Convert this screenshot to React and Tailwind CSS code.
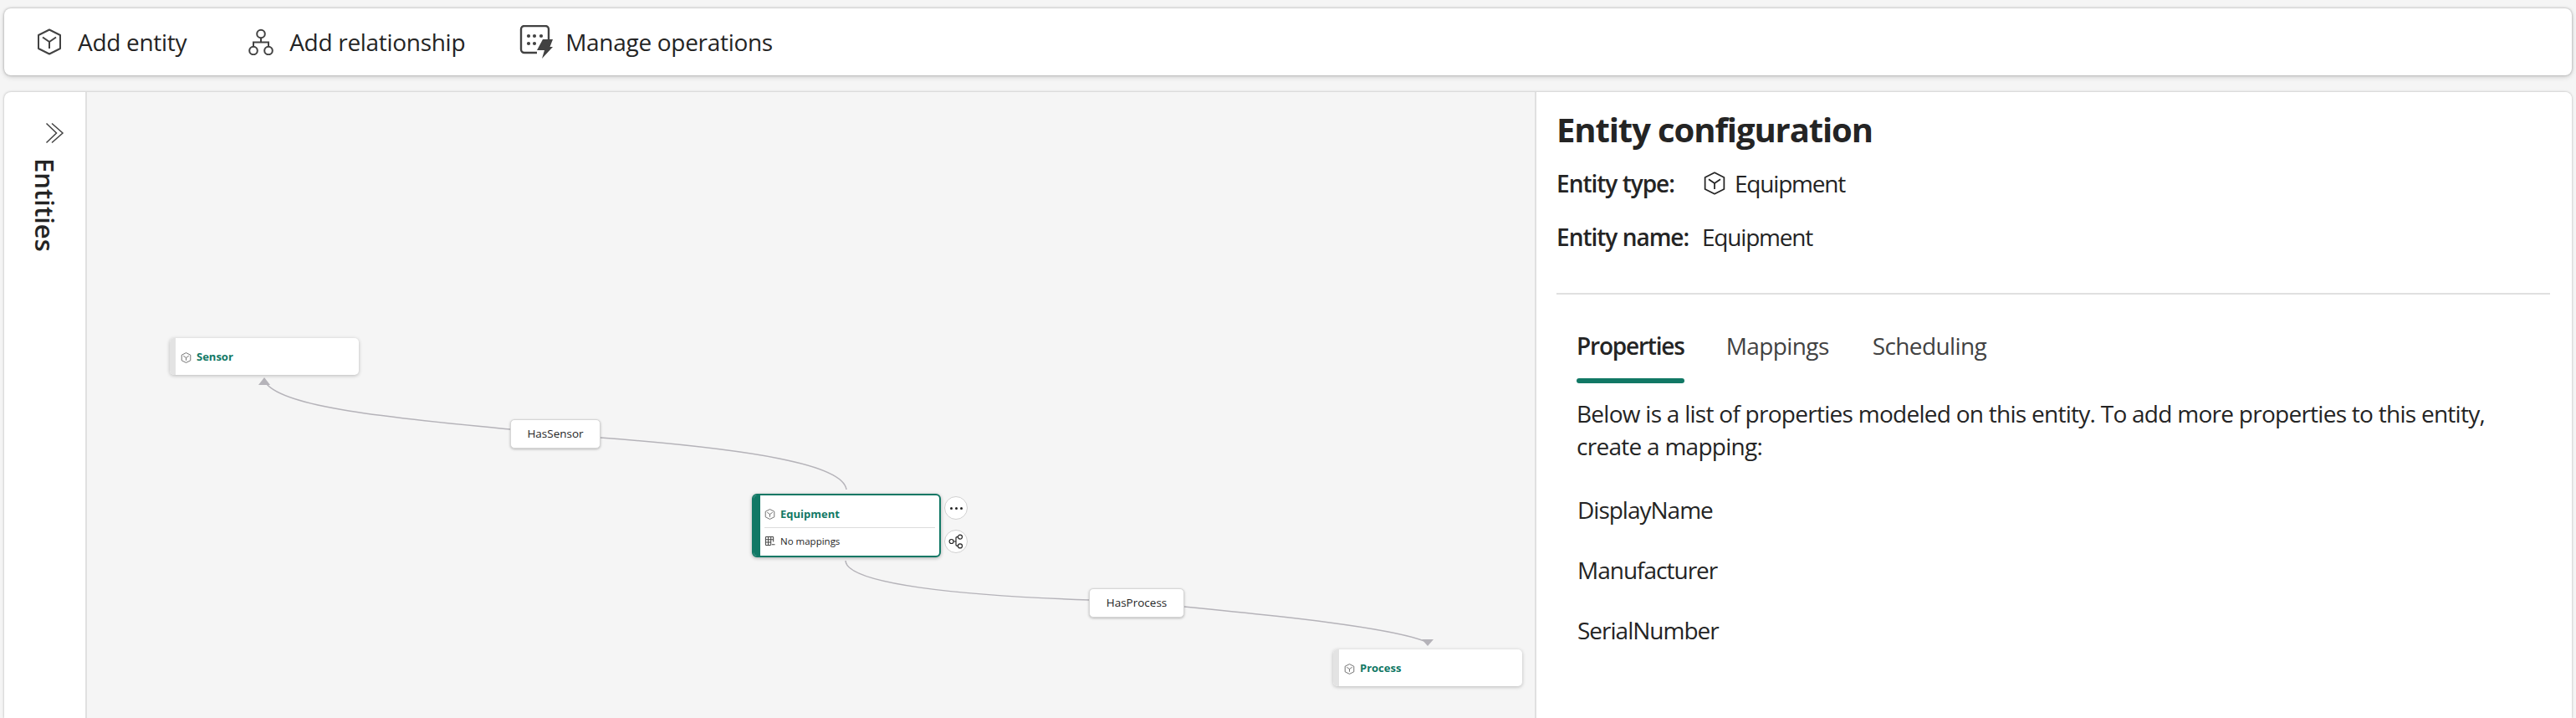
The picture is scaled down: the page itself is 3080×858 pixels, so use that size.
const font = { fontFamily: '"Open Sans", "Noto Sans", sans-serif' };

function CubeIcon({ className }) {
  return (
    <svg viewBox="0 0 32 32" fill="none" stroke="currentColor" strokeWidth="2" strokeLinejoin="round" className={className}>
      <path d="M16 1.500 29 8V24L16 30.500 3 24V8Z" />
      <path d="M8 10.500 16 16 24 10.500M16 16V24" />
    </svg>
  );
}

function RelationshipIcon({ className }) {
  return (
    <svg viewBox="0 0 32 32" fill="none" stroke="currentColor" strokeWidth="2" className={className}>
      <circle cx="16" cy="6.500" r="4.800" />
      <circle cx="7" cy="26.500" r="4.800" />
      <circle cx="25" cy="26.500" r="4.800" />
      <path d="M16 11.300V16.500M7 21.700V16.500H25V21.700" />
    </svg>
  );
}

function OperationsIcon({ className }) {
  return (
    <svg viewBox="0 0 40 40" className={className}>
      <path d="M21 33H6a4 4 0 0 1-4-4V5a4 4 0 0 1 4-4h25a4 4 0 0 1 4 4v19" fill="none" stroke="currentColor" strokeWidth="2.400" />
      <g fill="currentColor">
        <circle cx="11" cy="13" r="2.100" /><circle cx="18" cy="13" r="2.100" /><circle cx="26" cy="13" r="2.100" />
        <circle cx="11" cy="22" r="2.100" /><circle cx="18" cy="22" r="2.100" />
        <path d="M28 17h12l-3.500 9H40L27 40l3-10h-9Z" />
      </g>
    </svg>
  );
}

function ChevronsIcon({ className }) {
  return (
    <svg viewBox="0 0 24 26" fill="none" stroke="currentColor" strokeWidth="1.500" className={className}>
      <path d="M1.500 1.500 13.500 13 1.500 24.500" />
      <path d="M8 1.500 21 13 8 24.500" />
    </svg>
  );
}

function TableIcon({ className }) {
  return (
    <svg viewBox="0 0 14 14" fill="none" stroke="currentColor" strokeWidth="1.100" className={className}>
      <path d="M8 12.500H2.500a1 1 0 0 1-1-1V2.500a1 1 0 0 1 1-1h8a1 1 0 0 1 1 1V8" />
      <path d="M1.500 5H11.500M1.500 8.500H8M5 1.500V12.500M8.300 1.500V12.500" />
      <path d="M9.500 11.500h4" />
    </svg>
  );
}

function ShareIcon({ className }) {
  return (
    <svg viewBox="0 0 20 20" fill="none" stroke="currentColor" strokeWidth="1.300" className={className}>
      <circle cx="4" cy="10" r="2.800" />
      <circle cx="15.500" cy="4" r="2.800" />
      <circle cx="15.500" cy="16" r="2.800" />
      <path d="M6.800 10H10V5.500Q10 4 11.500 4H12.700M10 10V14.500Q10 16 11.500 16H12.700" />
    </svg>
  );
}

function ToolButton({ icon, label, className }) {
  return (
    <div className={`flex items-center ${className}`}>
      {icon}
      <span className="text-[28px] font-medium tracking-[-0.3px] text-[#242424]">{label}</span>
    </div>
  );
}

function SmallNode({ name, className }) {
  return (
    <div className={`absolute flex h-[44px] w-[226px] overflow-hidden rounded-[5px] bg-white shadow-[0_1px_4px_rgba(0,0,0,0.25)] ${className}`}>
      <div className="w-[7px] bg-[#e3e3e3]" />
      <div className="flex items-center pl-[6px] pt-[2px]">
        <CubeIcon className="h-[13px] w-[13px] text-[#555]" />
        <span className="ml-[6px] text-[13px] font-bold text-[#117865]">{name}</span>
      </div>
    </div>
  );
}

function EdgeLabel({ text, className }) {
  return (
    <div className={`absolute flex h-[35px] items-center justify-center rounded-[5px] border border-[#d6d6d6] bg-white text-[13.500px] text-[#242424] shadow-[0_1px_3px_rgba(0,0,0,0.25)] ${className}`}>
      {text}
    </div>
  );
}

function Canvas() {
  return (
    <div className="relative min-w-0 flex-1 overflow-hidden bg-[#f5f5f5]">
      <svg viewBox="104 110 1729 748" className="absolute left-0 top-0 h-[748px] w-[1729px]" fill="none" stroke="#b5b3b9" strokeWidth="1.500">
        <path d="M1012 585C1008 555 900 537 718 523" />
        <path d="M610 513C500 502 345 490 319 459" />
        <path d="M1011 670C1012 698 1150 712 1303 717" />
        <path d="M1416 725C1540 737 1660 750 1703 766" />
        <path d="M316 451 309 460H323Z" fill="#b5b3b9" stroke="none" />
        <path d="M1707 772 1700 764H1714Z" fill="#b5b3b9" stroke="none" />
      </svg>

      <SmallNode name="Sensor" className="left-[99px] top-[294px]" />
      <SmallNode name="Process" className="left-[1490px] top-[666px]" />
      <EdgeLabel text="HasSensor" className="left-[506px] top-[391px] w-[108px]" />
      <EdgeLabel text="HasProcess" className="left-[1198px] top-[593px] w-[114px]" />

      <div className="absolute left-[795px] top-[480px] flex h-[76px] w-[226px] overflow-hidden rounded-[6px] border-[2px] border-[#117865] bg-white shadow-[0_1px_4px_rgba(0,0,0,0.3)]">
        <div className="w-[8px] bg-[#117865]" />
        <div className="flex-1 px-[5px]">
          <div className="flex h-[39px] items-center border-b border-[#dcdcdc] pt-[7px]">
            <CubeIcon className="h-[13px] w-[13px] text-[#555]" />
            <span className="ml-[6px] text-[13px] font-bold text-[#117865]">Equipment</span>
          </div>
          <div className="flex h-[31px] items-center">
            <TableIcon className="h-[13px] w-[13px] text-[#444]" />
            <span className="ml-[6px] text-[11.500px] text-[#242424]">No mappings</span>
          </div>
        </div>
      </div>

      <div className="absolute left-[1025px] top-[483px] flex h-[28px] w-[28px] items-center justify-center gap-[3px] rounded-full border border-[#d1d1d1] bg-white">
        <span className="h-[3px] w-[3px] rounded-full bg-[#242424]" />
        <span className="h-[3px] w-[3px] rounded-full bg-[#242424]" />
        <span className="h-[3px] w-[3px] rounded-full bg-[#242424]" />
      </div>
      <div className="absolute left-[1025px] top-[523px] flex h-[28px] w-[28px] items-center justify-center rounded-full border border-[#d1d1d1] bg-white">
        <ShareIcon className="h-[18px] w-[18px] text-[#242424]" />
      </div>
    </div>
  );
}

function ConfigPanel() {
  return (
    <div className="w-[1240px] shrink-0 border-l-[2px] border-[#e0e0e0] bg-white pl-[24px] pr-[26px] text-[#242424]">
      <h1 className="mt-[20px] h-[50px] text-[40px] font-bold leading-[50px] tracking-[-1.100px]">Entity configuration</h1>
      <div className="mt-[21px] flex h-[36px] items-center text-[28px]">
        <span className="w-[175px] font-semibold tracking-[-1px]">Entity type:</span>
        <CubeIcon className="h-[28px] w-[28px]" />
        <span className="ml-[10px] tracking-[-1.200px]">Equipment</span>
      </div>
      <div className="mt-[28px] flex h-[36px] items-center text-[28px]">
        <span className="w-[174px] font-semibold tracking-[-1px]">Entity name:</span>
        <span className="tracking-[-1.200px]">Equipment</span>
      </div>
      <div className="mt-[49px] h-[2px] bg-[#e0e0e0]" />
      <div className="mt-[43px] flex gap-[50px] pl-[24px] text-[28px]">
        <div className="flex h-[69px] flex-col">
          <span className="font-semibold leading-[36px] tracking-[-1.200px]">Properties</span>
          <span className="mt-[21px] h-[6px] rounded-full bg-[#117865]" />
        </div>
        <span className="leading-[36px] tracking-[-0.600px] text-[#424242]">Mappings</span>
        <span className="ml-[2px] leading-[36px] tracking-[-0.600px] text-[#424242]">Scheduling</span>
      </div>
      <p className="mt-[11px] pl-[24px] text-[28px] leading-[39px] tracking-[-0.730px]">
        Below is a list of properties modeled on this entity. To add more properties to this entity,
        <br />
        create a mapping:
      </p>
      <div className="mt-[38px] flex flex-col gap-[36px] pl-[25px] text-[28px] leading-[36px] tracking-[-1px]">
        <div>DisplayName</div>
        <div>Manufacturer</div>
        <div>SerialNumber</div>
      </div>
    </div>
  );
}

export default function App() {
  return (
    <div className="flex h-[858px] flex-col gap-[20px] overflow-hidden bg-[#f5f5f5] px-[5px] pt-[10px]" style={font}>
      <div className="flex h-[80px] shrink-0 items-center rounded-[8px] bg-white pl-[38px] shadow-[0_0_3px_rgba(0,0,0,0.3),0_2px_6px_rgba(0,0,0,0.15)]">
        <ToolButton icon={<CubeIcon className="mr-[18px] h-[32px] w-[32px] text-[#424242]" />} label="Add entity" className="mr-[73px]" />
        <ToolButton icon={<RelationshipIcon className="mr-[18px] h-[32px] w-[32px] text-[#424242]" />} label="Add relationship" className="mr-[65px]" />
        <ToolButton icon={<OperationsIcon className="mr-[15px] h-[40px] w-[40px] text-[#424242]" />} label="Manage operations" />
      </div>

      <div className="flex min-h-0 flex-1 overflow-hidden rounded-t-[8px] bg-white shadow-[0_0_3px_rgba(0,0,0,0.3)]">
        <div className="flex w-[99px] shrink-0 flex-col items-center border-r-[2px] border-[#e0e0e0] pt-[36px]">
          <ChevronsIcon className="ml-[24px] h-[26px] w-[24px] text-[#424242]" />
          <span className="mt-[17px] text-[31px] font-semibold leading-[36px] text-[#242424] [writing-mode:vertical-rl]">Entities</span>
        </div>
        <Canvas />
        <ConfigPanel />
      </div>
    </div>
  );
}
